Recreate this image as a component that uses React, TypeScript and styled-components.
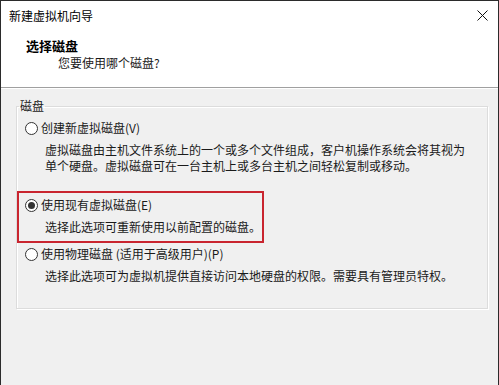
import React from "react";
import styled, { createGlobalStyle } from "styled-components";

const GlobalStyle = createGlobalStyle`
  html, body {
    margin: 0;
    padding: 0;
    background: #f0f0f0;
  }
  body {
    font-family: "Noto Sans CJK SC", "Liberation Sans", sans-serif;
    font-size: 12px;
    color: #1a1a1a;
  }
`;

const Window = styled.div`
  width: 499px;
  height: 385px;
  box-sizing: border-box;
  border: 1px solid #2b2b2b;
  border-bottom: none;
  display: flex;
  flex-direction: column;
  background: #f0f0f0;
  overflow: hidden;
`;

const Header = styled.div`
  height: 86px;
  flex-shrink: 0;
  background: #fff;
  border-bottom: 1px solid #a0a0a0;
  box-shadow: 0 1px 0 #fff;
  display: flex;
  flex-direction: column;
`;

const TitleBar = styled.div`
  height: 29px;
  display: flex;
  align-items: center;
  justify-content: space-between;
  padding: 0 10px 0 8px;
`;

const Title = styled.span`
  font-size: 12px;
  line-height: 16px;
  color: #000;
`;

const CloseButton = styled.span`
  width: 12px;
  height: 12px;
  display: flex;
  align-items: center;
  justify-content: center;
  margin-top: -1px;
`;

const Heading = styled.div`
  margin: 8px 0 0 25px;
  font-size: 13px;
  font-weight: bold;
  line-height: 16px;
  color: #000;
`;

const SubHeading = styled.div`
  margin: 1px 0 0 57px;
  font-size: 12px;
  line-height: 16px;
  color: #1a1a1a;
`;

const Body = styled.div`
  flex: 1;
  padding: 10px 10px 0 15px;
`;

const Group = styled.fieldset`
  margin: 0;
  padding: 0 0 24px 0;
  border: 1px solid #dcdcdc;
  box-shadow: inset 1px 1px 0 #fff, 1px 1px 0 #fff;
  min-width: 0;
`;

const Legend = styled.legend`
  margin-left: 2px;
  padding: 0 1px;
  font-size: 12px;
  line-height: 16px;
`;

const Option = styled.div<{ $highlighted?: boolean; $top: number }>`
  margin-top: ${(p) => p.$top}px;
  box-sizing: border-box;
  padding: ${(p) => (p.$highlighted ? "4px 0 6px 6px" : "0 0 0 8px")};
  border: ${(p) => (p.$highlighted ? "2px solid #c9252f" : "none")};
  width: ${(p) => (p.$highlighted ? "247px" : "auto")};
`;

const OptionRow = styled.div`
  display: flex;
  align-items: center;
  height: 16px;
  line-height: 16px;
`;

const Radio = styled.span<{ $checked?: boolean }>`
  width: 13px;
  height: 13px;
  box-sizing: border-box;
  border-radius: 50%;
  border: 1px solid #333;
  background: #fff;
  margin-right: 3px;
  display: flex;
  align-items: center;
  justify-content: center;
  flex-shrink: 0;

  &::after {
    content: "";
    display: ${(p) => (p.$checked ? "block" : "none")};
    width: 7px;
    height: 7px;
    border-radius: 50%;
    background: #333;
  }
`;

const Description = styled.div`
  margin: 6px 0 0 20px;
  line-height: 16px;
`;

interface DiskOption {
  label: string;
  lines: string[];
  checked?: boolean;
  highlighted?: boolean;
  top: number;
}

const options: DiskOption[] = [
  {
    label: "创建新虚拟磁盘(V)",
    lines: [
      "虚拟磁盘由主机文件系统上的一个或多个文件组成，客户机操作系统会将其视为",
      "单个硬盘。虚拟磁盘可在一台主机上或多台主机之间轻松复制或移动。",
    ],
    top: 6,
  },
  {
    label: "使用现有虚拟磁盘(E)",
    lines: ["选择此选项可重新使用以前配置的磁盘。"],
    checked: true,
    highlighted: true,
    top: 17,
  },
  {
    label: "使用物理磁盘 (适用于高级用户)(P)",
    lines: ["选择此选项可为虚拟机提供直接访问本地硬盘的权限。需要具有管理员特权。"],
    top: 3,
  },
];

const App: React.FC = () => (
  <>
    <GlobalStyle />
    <Window>
      <Header>
        <TitleBar>
          <Title>新建虚拟机向导</Title>
          <CloseButton>
            <svg width="11" height="11" viewBox="0 0 11 11">
              <path d="M0.5 0.5 L10.5 10.5 M10.5 0.5 L0.5 10.5" stroke="#111" strokeWidth="1" />
            </svg>
          </CloseButton>
        </TitleBar>
        <Heading>选择磁盘</Heading>
        <SubHeading>您要使用哪个磁盘?</SubHeading>
      </Header>
      <Body>
        <Group>
          <Legend>磁盘</Legend>
          {options.map((opt) => (
            <Option key={opt.label} $highlighted={opt.highlighted} $top={opt.top}>
              <OptionRow>
                <Radio $checked={opt.checked} />
                {opt.label}
              </OptionRow>
              <Description>
                {opt.lines.map((line) => (
                  <div key={line}>{line}</div>
                ))}
              </Description>
            </Option>
          ))}
        </Group>
      </Body>
    </Window>
  </>
);

export default App;
